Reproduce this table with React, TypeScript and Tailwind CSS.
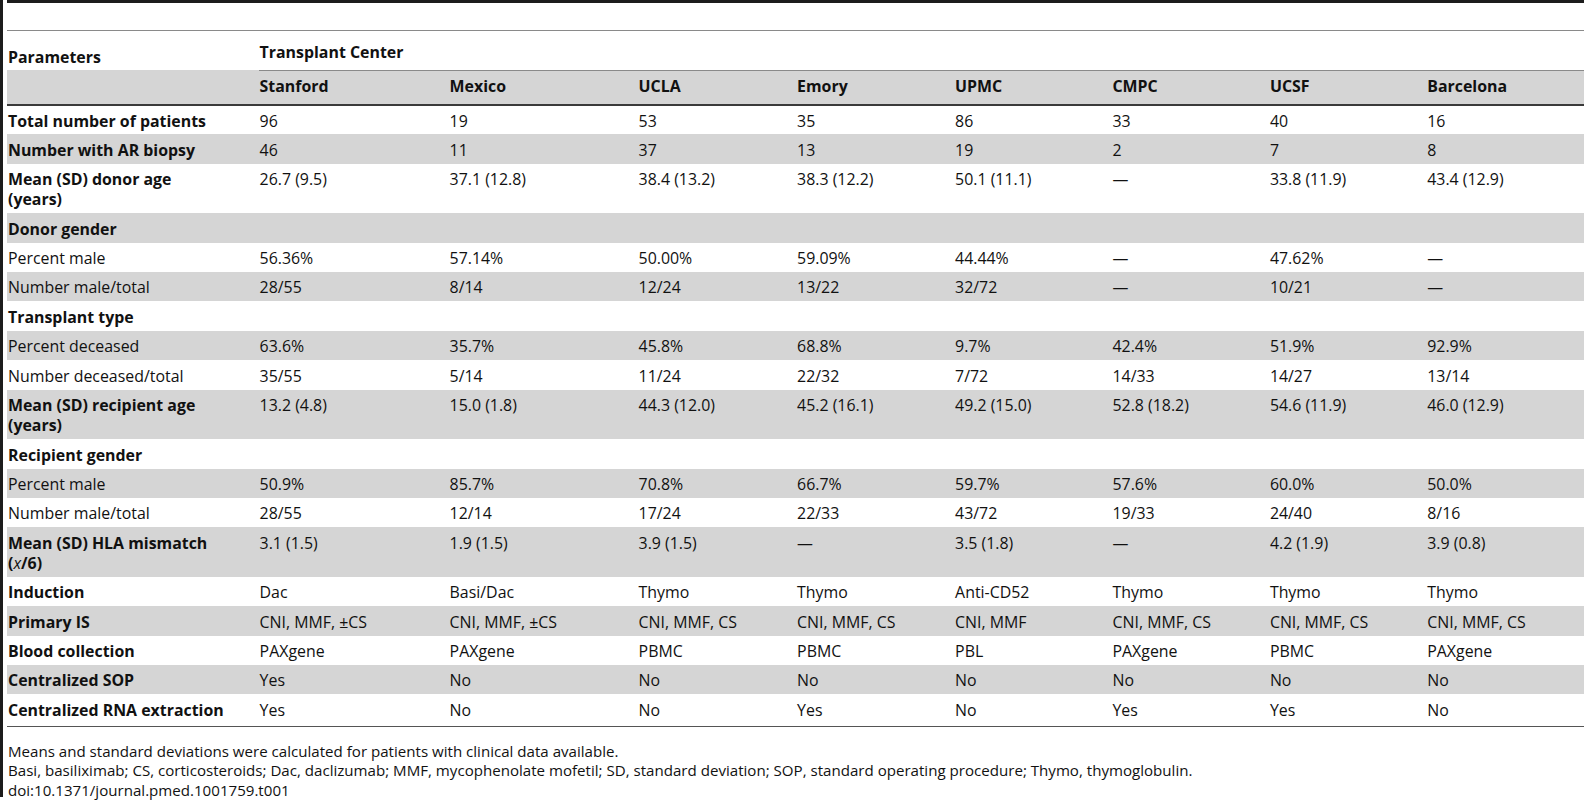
const centers = ["Stanford", "Mexico", "UCLA", "Emory", "UPMC", "CMPC", "UCSF", "Barcelona"];

type Row = {
  label: React.ReactNode;
  bold?: boolean;
  tall?: boolean;
  gray?: boolean;
  values?: string[];
};

const D = "—";

const rows: Row[] = [
  { label: "Total number of patients", bold: true, values: ["96", "19", "53", "35", "86", "33", "40", "16"] },
  { label: "Number with AR biopsy", bold: true, gray: true, values: ["46", "11", "37", "13", "19", "2", "7", "8"] },
  {
    label: (
      <>
        Mean (SD) donor age
        <br />
        (years)
      </>
    ),
    bold: true,
    tall: true,
    values: ["26.7 (9.5)", "37.1 (12.8)", "38.4 (13.2)", "38.3 (12.2)", "50.1 (11.1)", D, "33.8 (11.9)", "43.4 (12.9)"],
  },
  { label: "Donor gender", bold: true, gray: true },
  { label: "Percent male", values: ["56.36%", "57.14%", "50.00%", "59.09%", "44.44%", D, "47.62%", D] },
  { label: "Number male/total", gray: true, values: ["28/55", "8/14", "12/24", "13/22", "32/72", D, "10/21", D] },
  { label: "Transplant type", bold: true },
  { label: "Percent deceased", gray: true, values: ["63.6%", "35.7%", "45.8%", "68.8%", "9.7%", "42.4%", "51.9%", "92.9%"] },
  { label: "Number deceased/total", values: ["35/55", "5/14", "11/24", "22/32", "7/72", "14/33", "14/27", "13/14"] },
  {
    label: (
      <>
        Mean (SD) recipient age
        <br />
        (years)
      </>
    ),
    bold: true,
    tall: true,
    gray: true,
    values: ["13.2 (4.8)", "15.0 (1.8)", "44.3 (12.0)", "45.2 (16.1)", "49.2 (15.0)", "52.8 (18.2)", "54.6 (11.9)", "46.0 (12.9)"],
  },
  { label: "Recipient gender", bold: true },
  { label: "Percent male", gray: true, values: ["50.9%", "85.7%", "70.8%", "66.7%", "59.7%", "57.6%", "60.0%", "50.0%"] },
  { label: "Number male/total", values: ["28/55", "12/14", "17/24", "22/33", "43/72", "19/33", "24/40", "8/16"] },
  {
    label: (
      <>
        Mean (SD) HLA mismatch
        <br />(<span className="italic font-normal">x</span>/6)
      </>
    ),
    bold: true,
    tall: true,
    gray: true,
    values: ["3.1 (1.5)", "1.9 (1.5)", "3.9 (1.5)", D, "3.5 (1.8)", D, "4.2 (1.9)", "3.9 (0.8)"],
  },
  { label: "Induction", bold: true, values: ["Dac", "Basi/Dac", "Thymo", "Thymo", "Anti-CD52", "Thymo", "Thymo", "Thymo"] },
  {
    label: "Primary IS",
    bold: true,
    gray: true,
    values: ["CNI, MMF, \u00b1CS", "CNI, MMF, \u00b1CS", "CNI, MMF, CS", "CNI, MMF, CS", "CNI, MMF", "CNI, MMF, CS", "CNI, MMF, CS", "CNI, MMF, CS"],
  },
  { label: "Blood collection", bold: true, values: ["PAXgene", "PAXgene", "PBMC", "PBMC", "PBL", "PAXgene", "PBMC", "PAXgene"] },
  { label: "Centralized SOP", bold: true, gray: true, values: ["Yes", "No", "No", "No", "No", "No", "No", "No"] },
  { label: "Centralized RNA extraction", bold: true, values: ["Yes", "No", "No", "Yes", "No", "Yes", "Yes", "No"] },
];

const colWidths = ["w-[251.6px]", "w-[190px]", "w-[189px]", "w-[158.5px]", "w-[158px]", "w-[157.4px]", "w-[157.4px]", "w-[157.4px]", "w-[157.7px]"];

export default function App() {
  return (
    <div className="w-[1584px] h-[800px] bg-white flex font-['Open_Sans',sans-serif] text-[15.9px] text-[#111]">
      <div className="w-[3px] h-[797px] bg-[#1c1c1c] shrink-0" />
      <div className="flex-1 pl-[4px]">
        <div className="h-[3px] bg-[#1c1c1c]" />
        <div className="h-[28px] border-b border-[#8a8a8a]" />
        <table className="table-fixed border-collapse w-[1577px]">
          <colgroup>
            {colWidths.map((w, i) => (
              <col key={i} className={w} />
            ))}
          </colgroup>
          <thead>
            <tr className="h-[39px]">
              <th className="text-left align-top font-bold pt-[16px] pl-[1px] leading-5">Parameters</th>
              <th colSpan={8} className="text-left align-top font-bold pt-[11px] pl-[1px] leading-5 border-b border-[#8a8a8a]">
                Transplant Center
              </th>
            </tr>
            <tr className="h-[35px] bg-[#d5d5d5] border-b-2 border-[#3a3a3a]">
              <th />
              {centers.map((c) => (
                <th key={c} className="text-left align-top font-bold pt-[5px] pl-[1px] leading-5">
                  {c}
                </th>
              ))}
            </tr>
          </thead>
          <tbody>
            {rows.map((r, i) => (
              <tr
                key={i}
                className={`${r.tall ? "h-[49.5px]" : i === rows.length - 1 ? "h-[32px]" : "h-[29.4px]"} ${
                  r.gray ? "bg-[#d5d5d5]" : ""
                } ${i === rows.length - 1 ? "border-b border-[#555]" : ""}`}
              >
                <td className={`align-top pt-[5.4px] pl-[1px] leading-5 ${r.bold ? "font-bold" : ""}`}>{r.label}</td>
                {centers.map((c, j) => (
                  <td key={c} className="align-top pt-[5.4px] pl-[1px] leading-5 whitespace-nowrap">
                    {r.values ? r.values[j] : ""}
                  </td>
                ))}
              </tr>
            ))}
          </tbody>
        </table>
        <div className="pt-[15px] pl-[1px] text-[15.1px] leading-[19.6px]">
          <p>Means and standard deviations were calculated for patients with clinical data available.</p>
          <p>
            Basi, basiliximab; CS, corticosteroids; Dac, daclizumab; MMF, mycophenolate mofetil; SD, standard deviation; SOP,
            standard operating procedure; Thymo, thymoglobulin.
          </p>
          <p>doi:10.1371/journal.pmed.1001759.t001</p>
        </div>
      </div>
    </div>
  );
}
